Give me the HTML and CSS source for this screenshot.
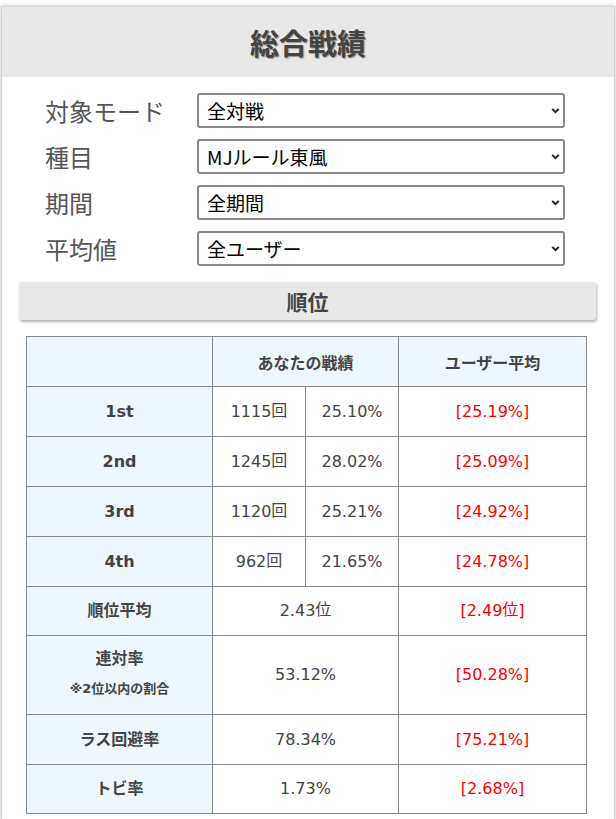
FILE: index.html
```html
<!DOCTYPE html>
<html lang="ja">
<head>
<meta charset="utf-8">
<title>総合戦績</title>
<link rel="stylesheet" href="styles.css">
</head>
<body>
<div class="panel">
  <h1 class="panel-title">総合戦績</h1>
  <div class="filters">
    <label class="f-label">対象モード</label>
    <div class="f-select"><select><option>全対戦</option></select><svg class="chev" viewBox="0 0 10 10"><path d="M2 3.5 L5 6.5 L8 3.5" fill="none" stroke="#222" stroke-width="1.8"/></svg></div>
    <label class="f-label">種目</label>
    <div class="f-select"><select><option>MJルール東風</option></select><svg class="chev" viewBox="0 0 10 10"><path d="M2 3.5 L5 6.5 L8 3.5" fill="none" stroke="#222" stroke-width="1.8"/></svg></div>
    <label class="f-label">期間</label>
    <div class="f-select"><select><option>全期間</option></select><svg class="chev" viewBox="0 0 10 10"><path d="M2 3.5 L5 6.5 L8 3.5" fill="none" stroke="#222" stroke-width="1.8"/></svg></div>
    <label class="f-label">平均値</label>
    <div class="f-select"><select><option>全ユーザー</option></select><svg class="chev" viewBox="0 0 10 10"><path d="M2 3.5 L5 6.5 L8 3.5" fill="none" stroke="#222" stroke-width="1.8"/></svg></div>
  </div>
  <h2 class="section-title">順位</h2>
  <table class="stats">
    <colgroup><col class="c1"><col class="c2"><col class="c3"><col class="c4"></colgroup>
    <tr class="head"><th></th><th colspan="2">あなたの戦績</th><th>ユーザー平均</th></tr>
    <tr><th>1st</th><td>1115<span class="u">回</span></td><td>25.10%</td><td class="avg">[25.19%]</td></tr>
    <tr><th>2nd</th><td>1245<span class="u">回</span></td><td>28.02%</td><td class="avg">[25.09%]</td></tr>
    <tr><th>3rd</th><td>1120<span class="u">回</span></td><td>25.21%</td><td class="avg">[24.92%]</td></tr>
    <tr><th>4th</th><td>962<span class="u">回</span></td><td>21.65%</td><td class="avg">[24.78%]</td></tr>
    <tr class="short"><th>順位平均</th><td colspan="2">2.43<span class="u">位</span></td><td class="avg">[2.49<span class="u">位</span>]</td></tr>
    <tr class="tall"><th>連対率<span class="note">※2位以内の割合</span></th><td colspan="2">53.12%</td><td class="avg">[50.28%]</td></tr>
    <tr><th>ラス回避率</th><td colspan="2">78.34%</td><td class="avg">[75.21%]</td></tr>
    <tr class="short"><th>トビ率</th><td colspan="2">1.73%</td><td class="avg">[2.68%]</td></tr>
  </table>
</div>
</body>
</html>
```
FILE: styles.css
```css
html, body {
  margin: 0;
  padding: 0;
  background: #fff;
  font-family: "DejaVu Sans", "Noto Sans CJK JP", sans-serif;
}
.panel {
  margin: 6px 1px 0 1px;
  border: 1px solid #d4d4d4;
  box-shadow: 0 0 4px rgba(0,0,0,0.25);
  padding-bottom: 6px;
}
.panel-title {
  margin: 0;
  height: 70px;
  background: #e8e8e8;
  color: #444;
  font-size: 29px;
  font-weight: bold;
  line-height: 70px;
  text-align: center;
  text-shadow: 1px 1px 1px rgba(0,0,0,0.35);
  font-family: "Noto Sans CJK JP", sans-serif;
}
.filters {
  display: grid;
  grid-template-columns: 152px 368px;
  row-gap: 11px;
  padding: 16px 0 0 43px;
  align-items: center;
}
.f-label {
  font-size: 24px;
  color: #555;
  font-family: "Noto Sans CJK JP", sans-serif;
  line-height: 35px;
}
.f-select {
  position: relative;
  height: 35px;
}
.f-select select {
  appearance: none;
  -webkit-appearance: none;
  width: 100%;
  height: 35px;
  box-sizing: border-box;
  border: 2px solid #888;
  border-radius: 3px;
  background: #fff;
  color: #000;
  font-size: 19px;
  font-family: "Noto Sans CJK JP", sans-serif;
  padding: 0 0 0 8px;
  margin: 0;
}
.chev {
  position: absolute;
  right: 4px;
  top: 12px;
  width: 11px;
  height: 11px;
}
.section-title {
  margin: 16px 18px 0 17px;
  height: 38px;
  background: #e8e8e8;
  border-radius: 3px;
  box-shadow: 1px 2px 3px rgba(0,0,0,0.3);
  color: #444;
  font-size: 21px;
  font-weight: bold;
  line-height: 38px;
  text-align: center;
  font-family: "Noto Sans CJK JP", sans-serif;
}
.stats {
  margin: 16px 0 0 24px;
  border-collapse: collapse;
  table-layout: fixed;
  width: 560px;
  color: #444;
}
.stats col.c1 { width: 186px; }
.stats col.c2 { width: 93px; }
.stats col.c3 { width: 93px; }
.stats col.c4 { width: 188px; }
.stats th, .stats td {
  border: 1px solid #888;
  height: 49px;
  padding: 0;
  text-align: center;
  vertical-align: middle;
  font-size: 16px;
  line-height: 20px;
}
.stats th {
  background: #eef7fe;
  font-weight: bold;
}
.stats .head th {
  font-size: 16px;
  font-family: "Noto Sans CJK JP", sans-serif;
}
.stats td {
  background: #fff;
}
.stats td.avg {
  color: #f00;
}
.stats .u {
  position: relative;
  top: -1px;
}
.stats tr.short th, .stats tr.short td {
  height: 48px;
}
.stats tr.tall th, .stats tr.tall td {
  height: 76px;
}
.stats tr.tall th {
  padding-bottom: 2px;
}
.note {
  display: block;
  font-size: 13px;
  margin-top: 10px;
}
```
